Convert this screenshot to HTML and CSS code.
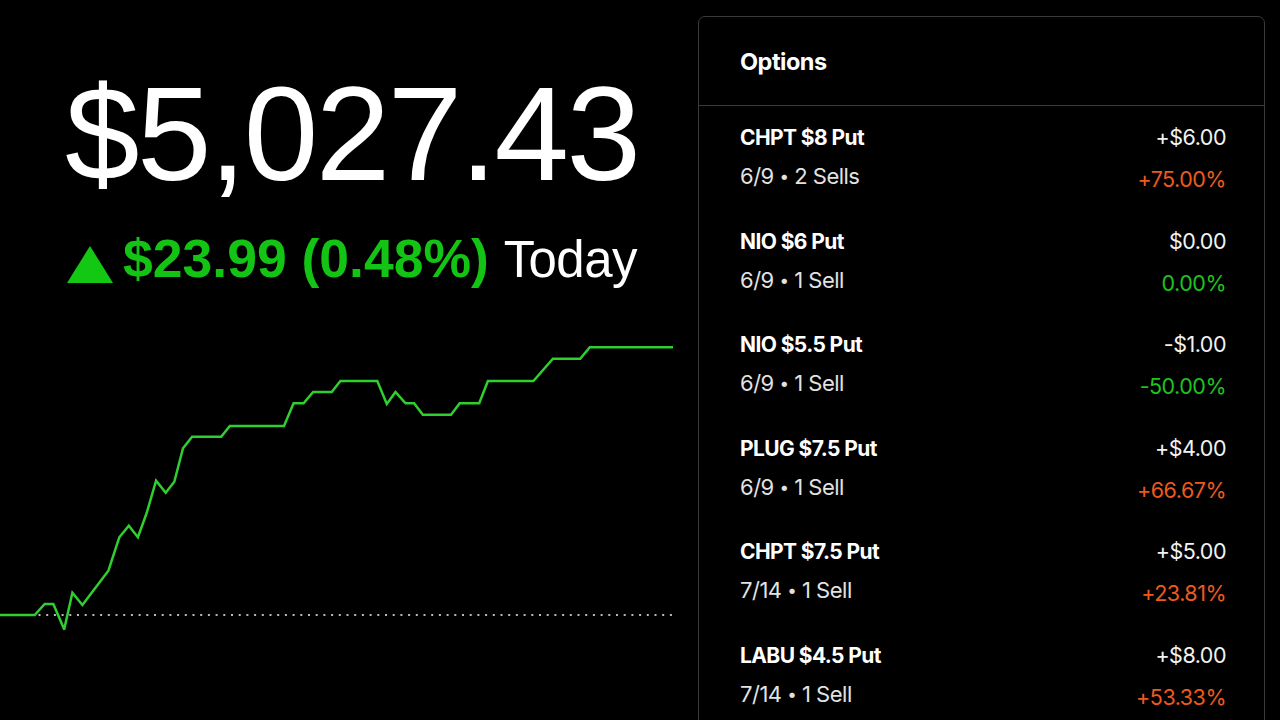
FILE: index.html
```html
<!DOCTYPE html>
<html>
<head>
<meta charset="utf-8">
<link rel="stylesheet" href="styles.css">
</head>
<body>
<div class="page">
  <div class="left">
    <div class="summary">
      <div class="balance">$5,027.43</div>
      <div class="change">
        <svg class="tri" width="46" height="37" viewBox="0 0 46 37"><polygon points="0,37 46,37 23,0" fill="#12c812"/></svg><span class="gain">$23.99 (0.48%)</span> <span class="today">Today</span>
      </div>
    </div>
    <svg class="chart" width="680" height="300" viewBox="0 330 680 300">
      <line x1="0" y1="615" x2="676" y2="615" stroke="#b8b8b8" stroke-width="2" stroke-dasharray="2 5.7"/>
      <polyline fill="none" stroke="#2fcf2f" stroke-width="2.5" stroke-linejoin="miter" points="0,615 34.7,615 44.7,604 53.3,604 64.2,629.3 72.4,592.7 82.4,605 108.4,570.7 119.3,537.3 128.8,525.7 137.9,537.3 146.6,513.3 156.1,480.7 165.7,492.7 174.3,481.7 183,448.3 192.1,436.7 221.2,436.7 229.8,426 284,426 293.6,403.3 303.6,403.3 313.1,392 331.7,392 340.4,381 377.3,381 386.8,404 395.5,392 405.5,403.3 414.1,403.3 422.8,414.7 451,414.7 459.7,403.3 479.2,403.3 487.9,381 533.4,381 552.9,358.7 580.2,358.7 589.8,347.3 673,347.3"/>
    </svg>
  </div>
  <div class="panel">
    <div class="panel-head">Options</div>
    <div class="rows">
      <div class="row">
        <div class="line"><span class="title">CHPT $8 Put</span><span class="value">+$6.00</span></div>
        <div class="line sub"><span>6/9 <span class="dot">•</span> 2 Sells</span><span class="pct up">+75.00%</span></div>
      </div>
      <div class="row">
        <div class="line"><span class="title">NIO $6 Put</span><span class="value">$0.00</span></div>
        <div class="line sub"><span>6/9 <span class="dot">•</span> 1 Sell</span><span class="pct down">0.00%</span></div>
      </div>
      <div class="row">
        <div class="line"><span class="title">NIO $5.5 Put</span><span class="value">-$1.00</span></div>
        <div class="line sub"><span>6/9 <span class="dot">•</span> 1 Sell</span><span class="pct down">-50.00%</span></div>
      </div>
      <div class="row">
        <div class="line"><span class="title">PLUG $7.5 Put</span><span class="value">+$4.00</span></div>
        <div class="line sub"><span>6/9 <span class="dot">•</span> 1 Sell</span><span class="pct up">+66.67%</span></div>
      </div>
      <div class="row">
        <div class="line"><span class="title">CHPT $7.5 Put</span><span class="value">+$5.00</span></div>
        <div class="line sub"><span>7/14 <span class="dot">•</span> 1 Sell</span><span class="pct up">+23.81%</span></div>
      </div>
      <div class="row">
        <div class="line"><span class="title">LABU $4.5 Put</span><span class="value">+$8.00</span></div>
        <div class="line sub"><span>7/14 <span class="dot">•</span> 1 Sell</span><span class="pct up">+53.33%</span></div>
      </div>
    </div>
  </div>
</div>
</body>
</html>
```

FILE: styles.css
```css
* { box-sizing: border-box; }
html, body {
  margin: 0;
  padding: 0;
  background: #000;
  width: 1280px;
  height: 720px;
  overflow: hidden;
}
.page {
  display: flex;
  align-items: flex-start;
}
.left {
  width: 680px;
  flex: none;
}
.summary {
  padding-left: 65px;
  padding-top: 67px;
  color: #fff;
  font-family: "Liberation Sans", Arial, sans-serif;
}
.balance {
  font-size: 134px;
  line-height: 134px;
  letter-spacing: -2.5px;
  white-space: nowrap;
}
.change {
  margin-top: 28px;
  margin-left: 2px;
  height: 60px;
  line-height: 60px;
  font-size: 53.5px;
  white-space: nowrap;
}
.tri {
  vertical-align: -6px;
  margin-right: 10px;
}
.gain {
  color: #14c414;
  font-weight: bold;
}
.today {
  color: #fff;
  font-size: 51px;
  letter-spacing: -0.6px;
}
.chart {
  display: block;
  margin-top: 41px;
}
.panel {
  margin-top: 16px;
  margin-left: 18px;
  width: 567px;
  height: 760px;
  flex: none;
  border: 1px solid #3a3a3a;
  border-radius: 7px;
  font-family: Inter, "Liberation Sans", sans-serif;
  color: #fff;
}
.panel-head {
  height: 89px;
  border-bottom: 1px solid #3a3a3a;
  padding-left: 41px;
  display: flex;
  align-items: center;
  font-weight: bold;
  font-size: 23.5px;
  letter-spacing: -0.5px;
}
.row {
  padding: 17px 38px 0 41px;
  height: 103.6px;
}
.line {
  display: flex;
  justify-content: space-between;
  align-items: baseline;
  line-height: 28px;
}
.title {
  font-weight: bold;
  font-size: 21px;
  letter-spacing: -0.6px;
}
.value {
  font-size: 21.5px;
  letter-spacing: -0.5px;
  color: #f2f2f2;
}
.sub {
  margin-top: 10px;
  font-size: 22px;
  letter-spacing: -0.5px;
  color: #e2e2e2;
}
.dot {
  font-size: 17px;
  vertical-align: 2px;
}
.pct {
  position: relative;
  top: 3px;
  font-size: 21.5px;
}
.up { color: #ee5a1e; }
.down { color: #1fc21f; }
```
